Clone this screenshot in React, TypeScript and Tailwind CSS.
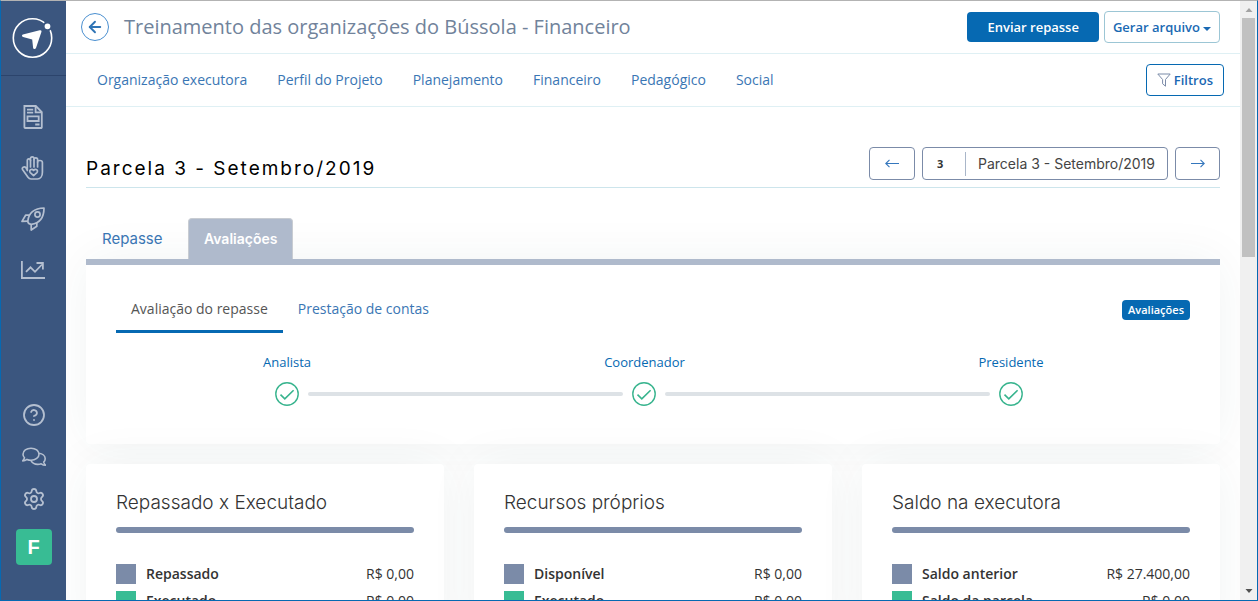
import { ArrowLeft, CircleHelp, Settings } from 'lucide-react';

const navLinks = ['Organização executora', 'Perfil do Projeto', 'Planejamento', 'Financeiro', 'Pedagógico', 'Social'];

const cards = [
  {
    title: 'Repassado x Executado',
    rows: [
      { label: 'Repassado', value: 'R$ 0,00', color: 'bg-[#7b8ba8]' },
      { label: 'Executado', value: 'R$ 0,00', color: 'bg-[#38bc94]' },
    ],
  },
  {
    title: 'Recursos próprios',
    rows: [
      { label: 'Disponível', value: 'R$ 0,00', color: 'bg-[#7b8ba8]' },
      { label: 'Executado', value: 'R$ 0,00', color: 'bg-[#38bc94]' },
    ],
  },
  {
    title: 'Saldo na executora',
    rows: [
      { label: 'Saldo anterior', value: 'R$ 27.400,00', color: 'bg-[#7b8ba8]' },
      { label: 'Saldo da parcela', value: 'R$ 0,00', color: 'bg-[#38bc94]' },
    ],
  },
];

function Logo() {
  return (
    <svg className="w-11 h-10" viewBox="0 0 44 40" fill="none">
      <circle cx="20.5" cy="20" r="19.2" stroke="#fff" strokeWidth="1.6" />
      <circle cx="35.5" cy="8.3" r="3.9" fill="#fff" stroke="#3b567f" strokeWidth="2" />
      <path
        d="M10.9 16.4 27.700 12.300c1.500-.4 2.100.4 1.700 1.700L24 30c-.6 1.500-2.700 1.400-2.900-.2l-.9-8.200-9.100-2.700c-1.400-.4-1.500-2.100-.2-2.500z"
        fill="#fff"
      />
    </svg>
  );
}

function DocumentIcon() {
  return (
    <svg className="w-6 h-6" viewBox="0 0 24 24" fill="none" stroke="currentColor" strokeWidth="1.8">
      <path d="M3.4 1h11.400l6 6v15.200a.8.8 0 0 1-.8.8H4.200a.8.8 0 0 1-.8-.8z" />
      <path d="M14.600 1.300v6h6M6 4.600h6.200M6 7.700h6.200M14.200 19.500h4.300" />
      <path d="M6.500 11.300h11.200v4.700H6.500z" />
    </svg>
  );
}

function HandIcon() {
  return (
    <svg className="w-6 h-6" viewBox="0 0 24 24" fill="none" stroke="currentColor" strokeWidth="1.7" strokeLinejoin="round" strokeLinecap="round">
      <path d="M6.300 14.500V4.600c0-2.300 3.200-2.300 3.200 0V2.600c0-2.200 3.500-2.200 3.500 0v1c0-2.200 3.600-2.200 3.600 0V6c0-2 4.800-2.200 4.800.6v9.600c0 4-2 6.800-5 6.800H10c-1.500 0-2.300-.7-3-1.700l-5.300-7.500c-1.300-2.200 1.500-4 3.200-2.200z" />
      <path d="M9.500 4.600v6.400M13 3.600V11M16.600 6v5" />
      <path d="M12.600 19.700l-3.300-3.100c-1.900-2.300 1.500-4.500 3.300-2.200 1.800-2.300 5.200-.1 3.300 2.200z" />
    </svg>
  );
}

function RocketIcon() {
  return (
    <svg className="w-6 h-6" viewBox="0 0 24 24" fill="none" stroke="currentColor" strokeWidth="1.7" strokeLinejoin="round">
      <path d="M6.800 14.200C7.500 6.500 13 1 23 1c0 9.800-5 15.300-12.800 16.400-1.800-.2-3.400-1.600-3.400-3.200z" />
      <path d="M8.800 8.200H4.600L1 14.400l5.800-.2M15.800 15.200v4L10.200 23v-5.600" />
      <circle cx="16.500" cy="7.500" r="2.600" />
    </svg>
  );
}

function ChartIcon() {
  return (
    <svg className="w-6 h-6" viewBox="0 0 24 24" fill="none" stroke="currentColor" strokeWidth="1.8">
      <path d="M.9 3v17H24" />
      <path d="M5 13.800 9.500 9.300l4.500 4.500L21 6.500" />
      <path d="M15.500 5h6.400v6.500" />
    </svg>
  );
}

function ChatIcon() {
  return (
    <svg className="w-6 h-6" viewBox="0 0 24 24" fill="none" stroke="currentColor" strokeWidth="1.6" strokeLinejoin="round">
      <path d="M9 3.200c4.600 0 8 2.600 8 6s-3.400 6-8 6c-1.500 0-2.800-.3-4-.8-1.200.9-2.700 1.500-4.300 1.500.9-.9 1.500-2 1.800-3.100A5.300 5.300 0 0 1 1 9.200c0-3.400 3.400-6 8-6z" />
      <path d="M17 8.300c3.600.4 6.200 2.700 6.200 5.400 0 1.300-.5 2.400-1.500 3.400.3 1.100.9 2.200 1.800 3.100-1.600 0-3.100-.5-4.300-1.400-1 .4-2.300.6-3.500.6-3 0-5.500-1.300-6.700-3.700" />
    </svg>
  );
}

function FilterIcon() {
  return (
    <svg className="w-3.5 h-3.5 text-[#7b8ba8]" viewBox="0 0 14 14" fill="none" stroke="currentColor" strokeLinejoin="round">
      <path d="M.8 1h12.400L8.500 6.500v6.700L5.600 10.800V6.500z" />
    </svg>
  );
}

function LongArrow({ right = false }: { right?: boolean }) {
  return (
    <svg className="w-3.5 h-3" viewBox="0 0 14 12" fill="none" stroke="#3577bd" strokeWidth="1.1">
      {right ? <path d="M0 5.500h13M9.500 1.800 13.200 5.500 9.500 9.200" /> : <path d="M14 5.500H1M4.500 1.800.8 5.500l3.700 3.700" />}
    </svg>
  );
}

function Sidebar() {
  return (
    <aside className="w-[65px] shrink-0 bg-[#3b567f] text-[#b4bfd0] flex flex-col items-center">
      <a href="#" aria-label="Início" className="w-full h-[75px] flex items-center justify-center border-b border-[#2c446c]">
        <Logo />
      </a>
      <nav className="mt-[29px] pr-0.5 flex flex-col gap-[27px]">
        <a href="#" aria-label="Projetos"><DocumentIcon /></a>
        <a href="#" aria-label="Doações"><HandIcon /></a>
        <a href="#" aria-label="Ações"><RocketIcon /></a>
        <a href="#" aria-label="Relatórios"><ChartIcon /></a>
      </nav>
      <div className="mt-auto mb-[35px] flex flex-col items-center gap-[18px]">
        <a href="#" aria-label="Ajuda"><CircleHelp size={24} strokeWidth={1.8} /></a>
        <a href="#" aria-label="Mensagens"><ChatIcon /></a>
        <a href="#" aria-label="Configurações"><Settings size={24} strokeWidth={1.8} /></a>
        <button className="w-9 h-9 rounded bg-[#38bc94] text-white text-xl leading-none font-bold font-['Liberation_Sans',sans-serif]">F</button>
      </div>
    </aside>
  );
}

function Check() {
  return (
    <svg className="w-6 h-6" viewBox="0 0 24 24" fill="none" stroke="#38b48e" strokeWidth="1.4">
      <circle cx="12" cy="12" r="11.2" />
      <path d="M5.500 12.600l4.300 4.300L18.600 8.200" strokeWidth="1.6" />
    </svg>
  );
}

function Step({ name }: { name: string }) {
  return (
    <div className="w-6 flex flex-col items-center gap-2.5">
      <span className="text-[13px] leading-5 text-[#0669b2] whitespace-nowrap">{name}</span>
      <Check />
    </div>
  );
}

function Scrollbar() {
  return (
    <div className="w-[17px] shrink-0 bg-[#f0f0f0] flex flex-col items-center">
      <svg className="w-4 h-[17px] shrink-0" viewBox="0 0 16 17" fill="#a3a3a3"><path d="M4.500 11 8 7l3.500 4z" /></svg>
      <div className="w-[13px] h-[239px] bg-[#c1c1c1]" />
      <svg className="w-4 h-[17px] shrink-0 mt-auto" viewBox="0 0 16 17" fill="#505050"><path d="M4.500 6 8 10l3.500-4z" /></svg>
    </div>
  );
}

export default function App() {
  return (
    <div className="h-screen flex overflow-hidden bg-white border border-[#0669b2] border-t-[#b3b3b3] font-['Open_Sans',sans-serif] text-sm text-[#333]">
      <Sidebar />

      <main className="flex-1 min-w-0 overflow-hidden">
        <header className="h-[53px] pl-[15px] pr-5 flex items-center border-b border-[#dff0f4]">
          <a href="#" aria-label="Voltar" className="w-7 h-7 rounded-full border border-[#4a8fd0] text-[#2f74b5] flex items-center justify-center">
            <ArrowLeft size={18} strokeWidth={2.5} />
          </a>
          <h1 className="ml-[15px] text-xl text-[#71839b]">Treinamento das organizações do Bússola - Financeiro</h1>
          <div className="ml-auto flex items-center gap-[5px] text-[13px] font-semibold">
            <button className="h-[30px] px-5 rounded bg-[#0669b2] text-white">Enviar repasse</button>
            <button className="h-8 px-2 rounded border border-[#9cc6d5] text-[#1a69b3] flex items-center gap-[3px]">
              Gerar arquivo
              <svg className="w-2 h-1 mt-1" viewBox="0 0 8 4" fill="currentColor"><path d="M0 0h8L4 4z" /></svg>
            </button>
          </div>
        </header>

        <div className="h-[53px] px-4 flex items-center border-b border-[#dff0f4]">
          <nav className="flex text-[#3a76b4]">
            {navLinks.map((link) => (
              <a key={link} href="#" className="px-[15px]">{link}</a>
            ))}
          </nav>
          <button className="ml-auto h-8 px-2.5 rounded border border-[#0669b2] text-[#1a69b3] text-[13px] font-semibold flex items-center gap-[3px]">
            <FilterIcon />
            Filtros
          </button>
        </div>

        <div className="px-5 pt-10">
          <div className="pb-[7px] flex items-start justify-between border-b border-[#cde5ec]">
            <h2 className="pt-[11px] text-[19px] leading-[22px] tracking-[2px] text-black font-['Inter',sans-serif]">Parcela 3 - Setembro/2019</h2>
            <div className="flex gap-[7px]">
              <button aria-label="Parcela anterior" className="w-[46px] h-[33px] rounded border border-[#7b8ba8] flex items-center justify-center">
                <LongArrow />
              </button>
              <button className="h-[33px] rounded border border-[#7b8ba8] flex items-center">
                <span className="w-[43px] h-6 pr-2 flex items-center justify-center border-r border-[#a9b6c9] text-[11px] font-bold">3</span>
                <span className="px-3 text-sm font-['Inter',sans-serif] text-[#444]">Parcela 3 - Setembro/2019</span>
              </button>
              <button aria-label="Próxima parcela" className="w-[45px] h-[33px] rounded border border-[#7b8ba8] flex items-center justify-center">
                <LongArrow right />
              </button>
            </div>
          </div>

          <div className="mt-[30px] flex font-['Inter',sans-serif]">
            <a href="#" className="h-[41px] w-[102px] pl-4 flex items-center text-[15px] text-[#3a76b4]">Repasse</a>
            <a href="#" className="h-[41px] px-[15px] flex items-center rounded-t border border-b-0 border-[#c8ccd2] bg-[#afbacc] text-white text-sm font-semibold">Avaliações</a>
          </div>

          <section className="border-t-[6px] border-[#afbacc] bg-white rounded-b px-[30px] pt-[22px] pb-[38px] shadow-[0_0_50px_rgba(40,70,60,0.06)]">
            <div className="flex items-start justify-between">
              <div className="flex">
                <a href="#" className="h-[46px] px-[15px] flex items-center border-b-[3px] border-[#0669b2] text-[#555]">Avaliação do repasse</a>
                <a href="#" className="h-[46px] px-[15px] flex items-center border-b-[3px] border-transparent text-[#3a76b4]">Prestação de contas</a>
              </div>
              <span className="mt-[13px] h-5 px-1.5 flex items-center rounded bg-[#0669b2] text-white text-[11px] font-semibold">Avaliações</span>
            </div>

            <div className="mt-[19px] pl-[159px] pr-[167px] grid grid-cols-[24px_35fr_24px_36fr_24px] gap-[9px] items-end">
              <Step name="Analista" />
              <div className="h-1 mb-2.5 rounded-full bg-[#dde2e6]" />
              <Step name="Coordenador" />
              <div className="h-1 mb-2.5 rounded-full bg-[#dde2e6]" />
              <Step name="Presidente" />
            </div>
          </section>

          <div className="mt-5 grid grid-cols-3 gap-[30px]">
            {cards.map((card) => (
              <section key={card.title} className="bg-white rounded px-[30px] pt-6 pb-[30px] shadow-[0_0_50px_rgba(40,70,60,0.06)]">
                <h3 className="text-[19px] leading-[30px] font-light font-['Inter',sans-serif]">{card.title}</h3>
                <div className="mt-[9px] h-1.5 rounded-full bg-[#7b8ba8]" />
                <dl className="mt-[31px] flex flex-col gap-[7px]">
                  {card.rows.map((row) => (
                    <div key={row.label} className="flex items-center leading-5">
                      <span className={`w-5 h-5 mr-2.5 ${row.color}`} />
                      <dt className="font-semibold">{row.label}</dt>
                      <dd className="ml-auto">{row.value}</dd>
                    </div>
                  ))}
                </dl>
              </section>
            ))}
          </div>
        </div>
      </main>

      <Scrollbar />
    </div>
  );
}
